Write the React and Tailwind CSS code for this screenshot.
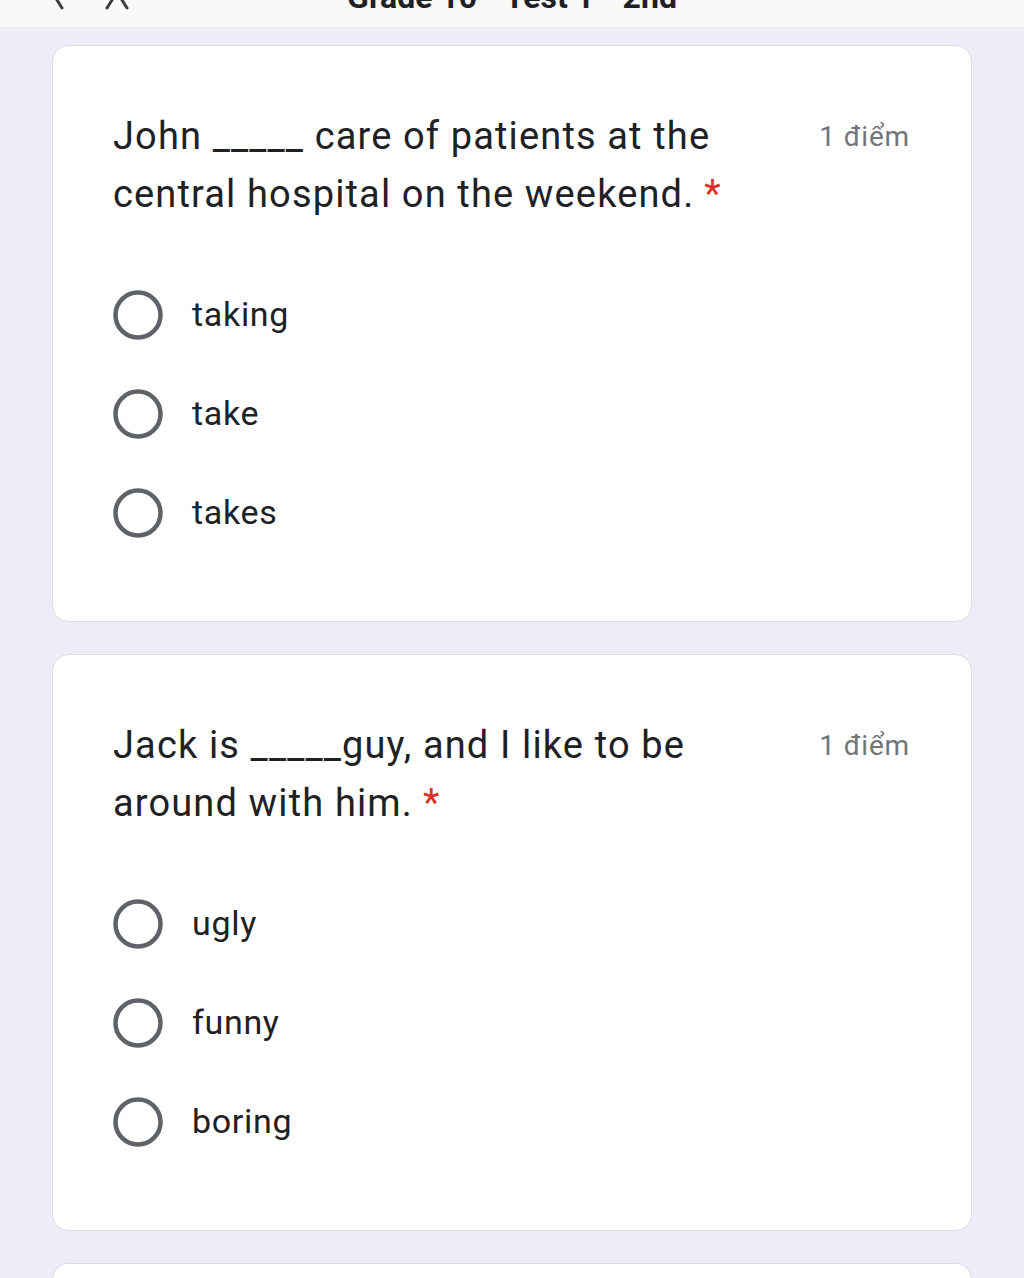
import React from "react";

function Radio() {
  return (
    <svg width="50" height="50" viewBox="0 0 50 50" className="shrink-0">
      <circle cx="25" cy="25" r="22.5" fill="none" stroke="#5f6368" strokeWidth="4.5" />
    </svg>
  );
}

function Card({ title, options }) {
  return (
    <section className="rounded-[16px] border border-[#dadce0] bg-white pl-[60px] pr-[61px] pt-[61px] pb-[59px]">
      <div className="flex items-start justify-between">
        <h2 className="max-w-[660px] text-[38px] leading-[58px] font-normal tracking-[0.03em] text-[#202124]">
          {title}
          <span className="ml-[10px] text-[#d93025]">*</span>
        </h2>
        <div className="shrink-0 text-[28px] leading-[60px] tracking-[0.03em] text-[#70757a]">1 điểm</div>
      </div>
      <div className="mt-[42px] flex flex-col">
        {options.map((o) => (
          <div key={o} className="flex h-[99px] items-center gap-[29px]">
            <Radio />
            <span className="text-[34px] tracking-[0.02em] text-[#202124]">{o}</span>
          </div>
        ))}
      </div>
    </section>
  );
}

export default function App() {
  return (
    <div className="min-h-screen bg-[#f0ebf8] font-['Roboto',sans-serif]">
      <header className="h-[27px] overflow-hidden bg-[#f9f9f9]">
        <div className="mt-[-28px] grid h-[42px] grid-cols-[1fr_auto_1fr] items-end">
          <div className="flex items-end gap-[36px] pl-[44px] pb-[6px]">
            <svg width="24" height="40" viewBox="0 0 24 40" fill="none" stroke="#3c4043" strokeWidth="3" strokeLinecap="round">
              <path d="M18 4 L8 20 L18 36" />
            </svg>
            <svg width="26" height="40" viewBox="0 0 26 40" fill="none" stroke="#3c4043" strokeWidth="3" strokeLinecap="round">
              <path d="M3 4 L23 36 M23 4 L3 36" />
            </svg>
          </div>
          <div className="text-[32px] leading-[42px] font-bold text-[#202124]">Grade 10 - Test 1 - 2nd</div>
          <div />
        </div>
      </header>
      <main className="flex flex-col gap-[32px] px-[52px] pt-[18px]">
        <Card
          title="John _____ care of patients at the central hospital on the weekend."
          options={["taking", "take", "takes"]}
        />
        <Card
          title="Jack is _____guy, and I like to be around with him."
          options={["ugly", "funny", "boring"]}
        />
        <div className="h-[60px] rounded-t-[16px] border border-b-0 border-[#dadce0] bg-white" />
      </main>
    </div>
  );
}
